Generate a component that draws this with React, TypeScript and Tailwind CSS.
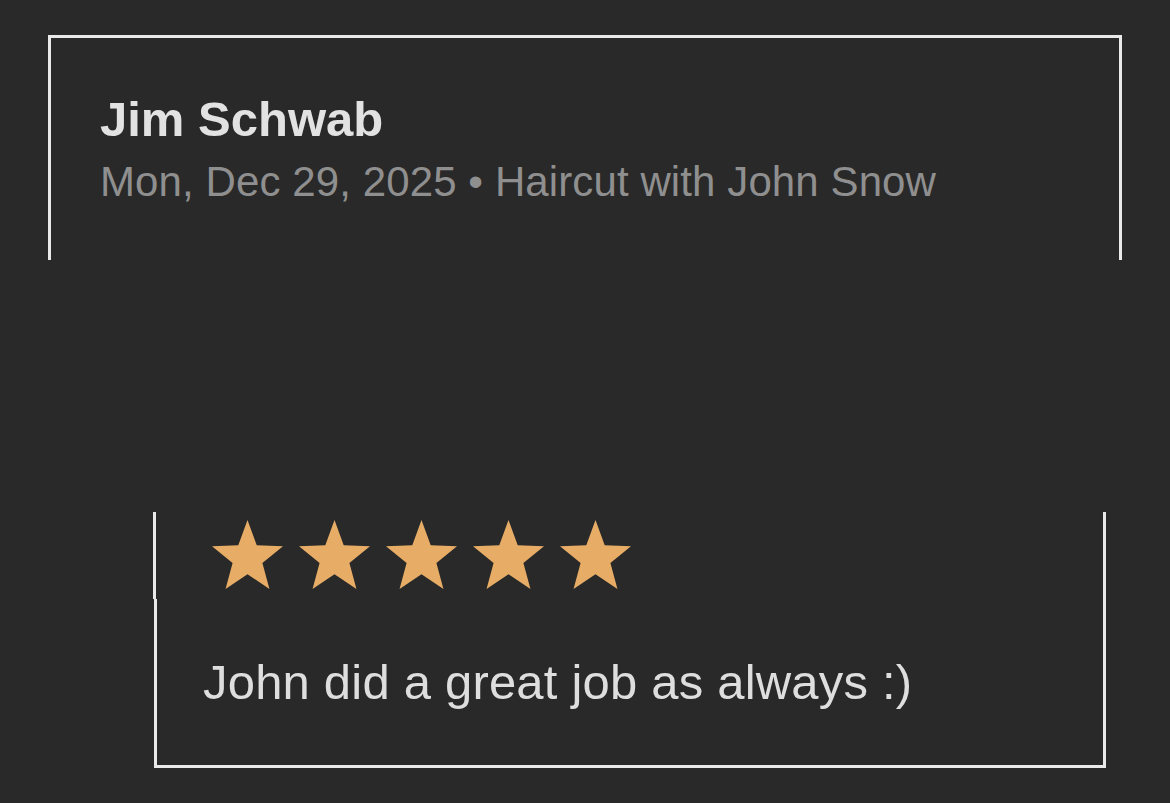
const STAR_POINTS =
  "50,0 62.34,33.01 97.55,34.55 69.97,56.49 79.39,90.45 50,71 20.61,90.45 30.03,56.49 2.45,34.55 37.66,33.01";

function Star() {
  return (
    <svg
      viewBox="2.45 0 95.1 90.45"
      preserveAspectRatio="none"
      className="h-[69px] w-[71px] shrink-0"
    >
      <polygon points={STAR_POINTS} fill="#e7ad66" strokeLinejoin="round" />
    </svg>
  );
}

export default function App() {
  const rating = 5;

  return (
    <main
      className="min-h-[803px] w-full bg-[#292929] pt-[35px]"
      style={{ fontFamily: '"Liberation Sans", Arial, sans-serif' }}
    >
      {/* appointment header */}
      <section className="ml-[48px] h-[225px] w-[1074px] border-x-[3px] border-t-[3px] border-[#e9e9e9] pl-[49px] pt-[57px]">
        <h1 className="text-[49px] font-bold leading-none text-[#e2e2e2]">
          Jim Schwab
        </h1>
        <p className="mt-[17px] text-[42px] leading-none tracking-[0.1px] text-[#8f8f8f]">
          Mon, Dec 29, 2025 • Haircut with John Snow
        </p>
      </section>

      <div className="h-[252px]" />

      {/* review */}
      <div className="ml-[153px] flex h-[87px] w-[953px] gap-[16px] border-x-[3px] border-[#e9e9e9] pl-[56px] pt-[8px]">
        {Array.from({ length: rating }).map((_, i) => (
          <Star key={i} />
        ))}
      </div>
      <div className="ml-[154px] h-[169px] w-[952px] border-x-[3px] border-b-[3px] border-[#e9e9e9] pl-[46px] pt-[59px]">
        <p className="text-[49px] leading-none tracking-[0.2px] text-[#dedede]">
          John did a great job as always :)
        </p>
      </div>
    </main>
  );
}
